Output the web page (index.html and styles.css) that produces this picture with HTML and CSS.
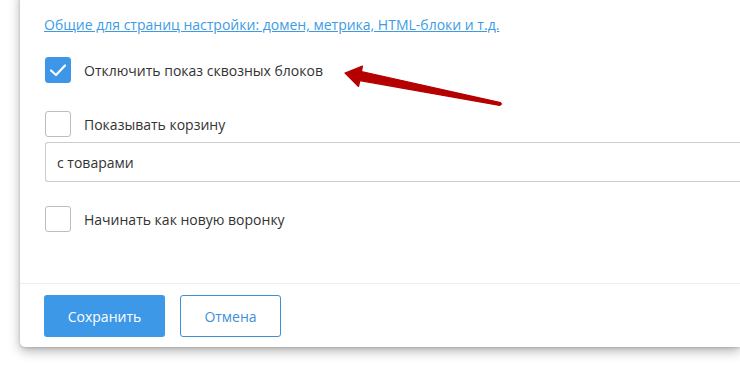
FILE: index.html
```html
<!DOCTYPE html>
<html lang="ru">
<head>
	<meta charset="UTF-8">
	<title>Настройки</title>
	<link rel="stylesheet" href="styles.css">
</head>
<body>
	<div class="card">
		<div class="card-body">
			<a class="link" href="#">Общие для страниц настройки: домен, метрика, HTML-блоки и т.д.</a>
			<label class="check-row first">
				<span class="box checked">
					<svg width="18" height="14" viewBox="0 0 18 14"><path d="M2 7.5 L7 12 L16 2.5" fill="none" stroke="#fff" stroke-width="2.2" stroke-linecap="round" stroke-linejoin="round"/></svg>
				</span>
				<span class="label">Отключить показ сквозных блоков</span>
			</label>
			<label class="check-row second">
				<span class="box"></span>
				<span class="label">Показывать корзину</span>
			</label>
			<div class="select">с товарами</div>
			<label class="check-row third">
				<span class="box"></span>
				<span class="label">Начинать как новую воронку</span>
			</label>
		</div>
		<div class="card-footer">
			<button class="btn btn-save">Сохранить</button>
			<button class="btn btn-cancel">Отмена</button>
		</div>
	</div>
	<!-- стрелка-пометка поверх скриншота -->
	<svg class="arrow" width="740" height="365" viewBox="0 0 740 365">
		<path d="M345 73 L362.5 66 L361.5 71.5 L500.5 102.6 L501.5 104 L499.8 105.4 L359.8 80.6 L358.5 86.5 Z" fill="#b50000" stroke="#b50000" stroke-width="1.2" stroke-linejoin="round"/>
	</svg>
</body>
</html>
```
FILE: styles.css
```css
*{
	margin: 0;
	padding: 0;
	box-sizing: border-box;
}
body{
	min-height: 365px;
	padding-top: 1px;
	background: #fff;
	font-family: "Open Sans", "Liberation Sans", sans-serif;
	font-size: 14px;
	color: #333;
}
.card{
	margin: -11px 0 0 20px;
	background: #fff;
	border-radius: 0 0 0 5px;
	box-shadow: 0 4px 12px rgba(0,0,0,0.3), 0 1px 3px rgba(0,0,0,0.15);
}
.card-body{
	padding: 26px 0 51px 24px;
	border-bottom: 1px solid #eee;
	display: flex;
	flex-direction: column;
	align-items: flex-start;
}
.link{
	display: block;
	line-height: 18px;
	color: #3d9be6;
	text-decoration: underline;
}
.check-row{
	display: flex;
	align-items: center;
	height: 26px;
	cursor: pointer;
}
.check-row.first{
	margin-top: 23px;
}
.check-row.second{
	margin-top: 28px;
}
.check-row.third{
	margin-top: 24px;
}
.box{
	width: 26px;
	height: 26px;
	margin-left: 1px;
	border: 1px solid #bdbdbd;
	border-radius: 3px;
	display: flex;
	align-items: center;
	justify-content: center;
}
.box.checked{
	background: #3d96e8;
	border-color: #3d96e8;
}
.label{
	margin-left: 13px;
}
.select{
	margin-top: 5px;
	margin-left: 1px;
	align-self: stretch;
	height: 40px;
	line-height: 40px;
	padding-left: 11px;
	border: 1px solid #ccc;
	border-right: none;
	border-radius: 3px 0 0 3px;
}
.card-footer{
	padding: 11px 24px 10px;
	display: flex;
	gap: 15px;
}
.btn{
	height: 42px;
	border-radius: 3px;
	font-family: "Open Sans", "Liberation Sans", sans-serif;
	font-size: 14px;
	cursor: pointer;
}
.btn-save{
	width: 121px;
	background: #3d99e8;
	border: none;
	color: #fff;
}
.btn-cancel{
	width: 101px;
	background: #fff;
	border: 1px solid #3d8fd9;
	color: #3d8fd9;
}
.arrow{
	position: absolute;
	top: 0;
	left: 0;
	pointer-events: none;
}
```
